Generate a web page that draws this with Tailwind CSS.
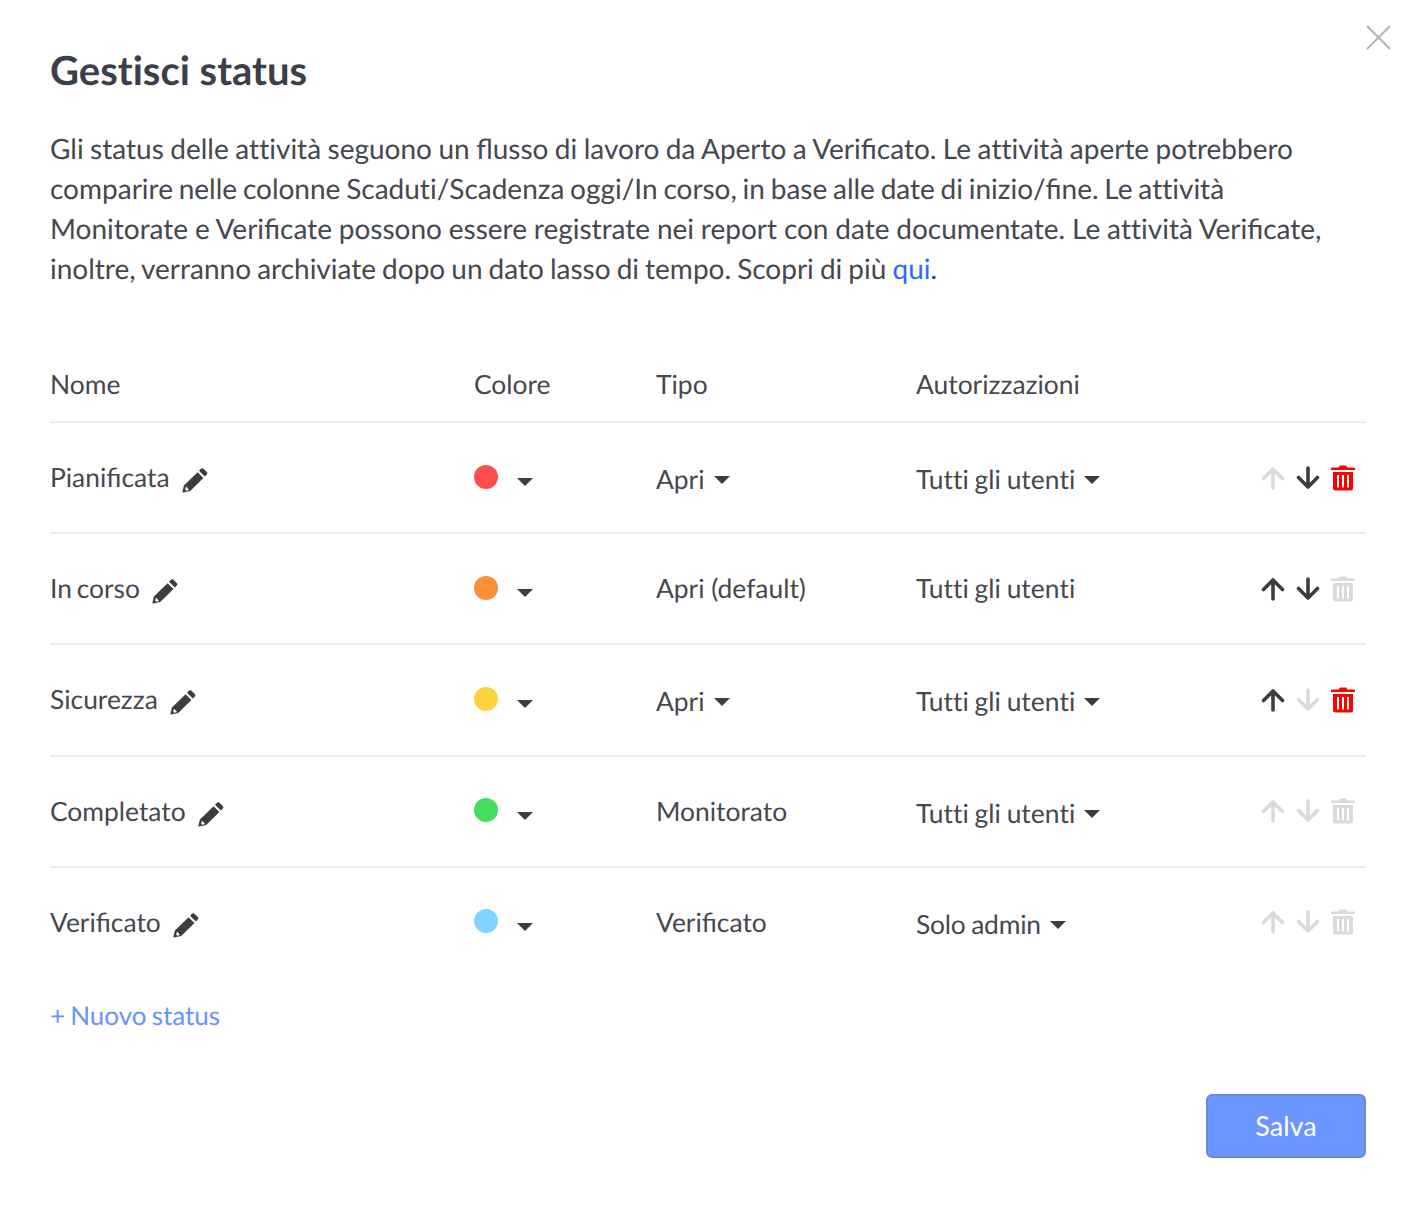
<!DOCTYPE html>
<html lang="en">
<head>
  <meta charset="UTF-8" />
  <title>Gestisci status</title>
  <script src="https://cdn.jsdelivr.net/npm/@tailwindcss/browser@4"></script>
</head>
<body class="bg-white font-['Lato',sans-serif] text-[#3d4047] [text-rendering:geometricPrecision]">
  <svg class="hidden">
    <symbol id="pencil" viewBox="0 0 26 26"><path fill="currentColor" d="M19.2 1.6 Q20.2.8 21.2 1.6 L25 5.2 Q25.8 6.2 25 7.2 L22.8 9.4 L17 3.8 Z M15.6 5.2 L21.4 10.9 L8.2 24 L1 25.6 Q.2 25.7.4 24.8 L1.9 18.5 Z M4 19.4 L3.2 22.8 L4.2 23.8 L7 23 Z" fill-rule="evenodd"/></symbol>
    <symbol id="up" viewBox="0 0 24 24"><path fill="none" stroke="currentColor" stroke-width="3.6" stroke-linecap="round" stroke-linejoin="round" d="M12 22V3M2.5 12.5L12 3l9.5 9.5"/></symbol>
    <symbol id="down" viewBox="0 0 24 24"><path fill="none" stroke="currentColor" stroke-width="3.6" stroke-linecap="round" stroke-linejoin="round" d="M12 2v19M2.5 11.5L12 21l9.5-9.5"/></symbol>
    <symbol id="trash" viewBox="0 0 24 26"><path fill="currentColor" fill-rule="evenodd" d="M8 1.8 Q8.5.5 10 .5 h4 Q15.5.5 16 1.8 L16.4 2.5 H23 Q24 2.5 24 3.5 V5 H0 V3.5 Q0 2.5 1 2.5 H7.6 Z M2 7 H22 V23 Q22 25.5 19.5 25.5 H4.5 Q2 25.5 2 23 Z M6 10 V22.5 H8 V10 Z M11 10 V22.5 H13 V10 Z M16 10 V22.5 H18 V10 Z"/></symbol>
  </svg>

  <div class="relative w-[1416px] h-[1206px] px-[50px] pt-[41px]">
    <button class="absolute left-[1366px] top-[25px] text-[#b5b5b5]">
      <svg class="block w-[25px] h-[25px]" viewBox="0 0 25 25"><path fill="none" stroke="currentColor" stroke-width="2" d="M1 1l23 23M24 1L1 24"/></svg>
    </button>

    <h1 class="text-[40px] leading-[58px] font-bold text-[#3a3f4a]">Ges<span class="tracking-[0.01px]">ti</span>sci status</h1>

    <p class="mt-[29px] text-[28px] leading-[40px] text-[#45484e] w-[1300px]">
      <span class="block [word-spacing:-0.7px]">Gli status delle a<span class="tracking-[0.01px]">tt</span>ività seguono un flusso di lavoro da Aperto a Verificato. Le a<span class="tracking-[0.01px]">tt</span>ività aperte potrebbero</span>
      <span class="block [word-spacing:-1.4px]">comparire nelle colonne Scadu<span class="tracking-[0.01px]">ti</span>/Scadenza oggi/In corso, in base alle date di inizio/fine. Le a<span class="tracking-[0.01px]">tt</span>ività</span>
      <span class="block [word-spacing:-0.35px]">Monitorate e Verificate possono essere registrate nei report con date documentate. Le a<span class="tracking-[0.01px]">tt</span>ività Verificate,</span>
      <span class="block [word-spacing:-1.1px]">inoltre, verranno archiviate dopo un dato lasso di tempo. Scopri di più <a href="#" class="text-[#2b6cf6]">qui</a>.</span>
    </p>

    <div class="mt-[61px] w-[1316px] text-[26.4px] text-[#45484e]">
      <div class="grid grid-cols-[424px_182px_260px_1fr] items-center h-[74px] pb-[1px] border-b-2 border-[#ececec]">
        <div>Nome</div><div>Colore</div><div>Tipo</div><div>Autorizzazioni</div>
      </div>

      <div class="grid grid-cols-[424px_182px_260px_1fr_105px] items-center h-[111px] border-b-2 border-[#ececec]">
        <div class="flex items-center gap-[12px]"><span>Pianificata</span><svg class="w-[26px] h-[26px] mt-[5px] text-[#3d3d3d]"><use href="#pencil"/></svg></div>
        <div class="flex items-center gap-[19px]"><span class="w-[24px] h-[24px] rounded-full bg-[#ff4d4d] -mt-[2px]"></span><span class="mt-[8px] w-0 h-0 border-x-[8px] border-x-transparent border-t-[8px] border-t-[#3d3d3d]"></span></div>
        <div class="flex items-center gap-[9px] mt-[4px]"><span>Apri</span><span class="mt-[2px] w-0 h-0 border-x-[8px] border-x-transparent border-t-[8px] border-t-[#3d3d3d]"></span></div>
        <div class="flex items-center gap-[9px] mt-[4px]"><span class="[word-spacing:-1px]">Tu<span class="tracking-[0.01px]">tt</span>i gli uten<span class="tracking-[0.01px]">ti</span></span><span class="mt-[2px] w-0 h-0 border-x-[8px] border-x-transparent border-t-[8px] border-t-[#3d3d3d]"></span></div>
        <div class="flex items-center gap-[11px]"><svg class="w-[24px] h-[24px] text-[#dadada]"><use href="#up"/></svg><svg class="w-[24px] h-[24px] text-[#3d3d3d]"><use href="#down"/></svg><svg class="w-[24px] h-[26px] text-[#fe0000]"><use href="#trash"/></svg></div>
      </div>

      <div class="grid grid-cols-[424px_182px_260px_1fr_105px] items-center h-[111px] border-b-2 border-[#ececec]">
        <div class="flex items-center gap-[12px]"><span class="[word-spacing:-2px]">In corso</span><svg class="w-[26px] h-[26px] mt-[5px] text-[#3d3d3d]"><use href="#pencil"/></svg></div>
        <div class="flex items-center gap-[19px]"><span class="w-[24px] h-[24px] rounded-full bg-[#ff8c36] -mt-[2px]"></span><span class="mt-[8px] w-0 h-0 border-x-[8px] border-x-transparent border-t-[8px] border-t-[#3d3d3d]"></span></div>
        <div>Apri (default)</div>
        <div class="[word-spacing:-1px]">Tu<span class="tracking-[0.01px]">tt</span>i gli uten<span class="tracking-[0.01px]">ti</span></div>
        <div class="flex items-center gap-[11px]"><svg class="w-[24px] h-[24px] text-[#3d3d3d]"><use href="#up"/></svg><svg class="w-[24px] h-[24px] text-[#3d3d3d]"><use href="#down"/></svg><svg class="w-[24px] h-[26px] text-[#dadada]"><use href="#trash"/></svg></div>
      </div>

      <div class="grid grid-cols-[424px_182px_260px_1fr_105px] items-center h-[112px] pb-[1px] border-b-2 border-[#ececec]">
        <div class="flex items-center gap-[12px]"><span>Sicurezza</span><svg class="w-[26px] h-[26px] mt-[5px] text-[#3d3d3d]"><use href="#pencil"/></svg></div>
        <div class="flex items-center gap-[19px]"><span class="w-[24px] h-[24px] rounded-full bg-[#ffd23f] -mt-[2px]"></span><span class="mt-[8px] w-0 h-0 border-x-[8px] border-x-transparent border-t-[8px] border-t-[#3d3d3d]"></span></div>
        <div class="flex items-center gap-[9px] mt-[4px]"><span>Apri</span><span class="mt-[2px] w-0 h-0 border-x-[8px] border-x-transparent border-t-[8px] border-t-[#3d3d3d]"></span></div>
        <div class="flex items-center gap-[9px] mt-[4px]"><span class="[word-spacing:-1px]">Tu<span class="tracking-[0.01px]">tt</span>i gli uten<span class="tracking-[0.01px]">ti</span></span><span class="mt-[2px] w-0 h-0 border-x-[8px] border-x-transparent border-t-[8px] border-t-[#3d3d3d]"></span></div>
        <div class="flex items-center gap-[11px]"><svg class="w-[24px] h-[24px] text-[#3d3d3d]"><use href="#up"/></svg><svg class="w-[24px] h-[24px] text-[#dadada]"><use href="#down"/></svg><svg class="w-[24px] h-[26px] text-[#fe0000]"><use href="#trash"/></svg></div>
      </div>

      <div class="grid grid-cols-[424px_182px_260px_1fr_105px] items-center h-[111px] border-b-2 border-[#ececec]">
        <div class="flex items-center gap-[12px]"><span>Completato</span><svg class="w-[26px] h-[26px] mt-[5px] text-[#3d3d3d]"><use href="#pencil"/></svg></div>
        <div class="flex items-center gap-[19px]"><span class="w-[24px] h-[24px] rounded-full bg-[#44dd5f] -mt-[4px]"></span><span class="mt-[8px] w-0 h-0 border-x-[8px] border-x-transparent border-t-[8px] border-t-[#3d3d3d]"></span></div>
        <div>Monitorato</div>
        <div class="flex items-center gap-[9px] mt-[4px]"><span class="[word-spacing:-1px]">Tu<span class="tracking-[0.01px]">tt</span>i gli uten<span class="tracking-[0.01px]">ti</span></span><span class="mt-[2px] w-0 h-0 border-x-[8px] border-x-transparent border-t-[8px] border-t-[#3d3d3d]"></span></div>
        <div class="flex items-center gap-[11px] -mt-[2px]"><svg class="w-[24px] h-[24px] text-[#dadada]"><use href="#up"/></svg><svg class="w-[24px] h-[24px] text-[#dadada]"><use href="#down"/></svg><svg class="w-[24px] h-[26px] text-[#dadada]"><use href="#trash"/></svg></div>
      </div>

      <div class="grid grid-cols-[424px_182px_260px_1fr_105px] items-center h-[109px]">
        <div class="flex items-center gap-[12px]"><span>Verificato</span><svg class="w-[26px] h-[26px] mt-[5px] text-[#3d3d3d]"><use href="#pencil"/></svg></div>
        <div class="flex items-center gap-[19px]"><span class="w-[24px] h-[24px] rounded-full bg-[#80d4ff] -mt-[4px]"></span><span class="mt-[8px] w-0 h-0 border-x-[8px] border-x-transparent border-t-[8px] border-t-[#3d3d3d]"></span></div>
        <div>Verificato</div>
        <div class="flex items-center gap-[9px] mt-[4px]"><span class="tracking-[-0.2px] [word-spacing:-1px]">Solo admin</span><span class="mt-[2px] w-0 h-0 border-x-[8px] border-x-transparent border-t-[8px] border-t-[#3d3d3d]"></span></div>
        <div class="flex items-center gap-[11px] -mt-[2px]"><svg class="w-[24px] h-[24px] text-[#dadada]"><use href="#up"/></svg><svg class="w-[24px] h-[24px] text-[#dadada]"><use href="#down"/></svg><svg class="w-[24px] h-[26px] text-[#dadada]"><use href="#trash"/></svg></div>
      </div>

      <a href="#" class="block mt-[19px] text-[26px] [word-spacing:-1.5px] text-[#6694ff]">+ Nuovo status</a>

      <div class="flex justify-end mt-[59px]">
        <button class="w-[160px] h-[64px] rounded-[6px] bg-[#6b95ff] border-2 border-[#6589e6] text-[27px] text-white">Salva</button>
      </div>
    </div>
  </div>
</body>
</html>
